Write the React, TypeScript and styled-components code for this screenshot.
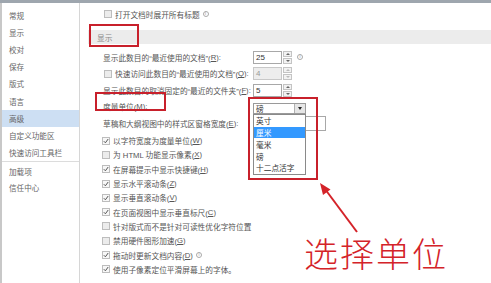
import React from "react";
import styled, { createGlobalStyle } from "styled-components";

const Global = createGlobalStyle`
  html, body { margin: 0; padding: 0; background: #fff; }
  * { box-sizing: border-box; }
`;

const Window = styled.div`
  position: relative;
  width: 491px;
  height: 283px;
  overflow: hidden;
  display: flex;
  background: #fff;
  border-top: 3px solid #9ea6ae;
  font-family: "Liberation Sans", "Noto Sans CJK SC", sans-serif;
  font-size: 7.7px;
  color: #555;
`;

const Sidebar = styled.nav`
  width: 80px;
  flex: none;
  display: flex;
  flex-direction: column;
  padding-top: 3.5px;
  border-left: 2px solid #c8c8c8;
  border-right: 1px solid #d6d6d6;
`;

const NavItem = styled.div<{ $active?: boolean; $h?: number }>`
  height: ${(p) => p.$h ?? 17.2}px;
  display: flex;
  align-items: center;
  padding-left: 7px;
  font-size: 7.6px;
  color: #666;
  background: ${(p) => (p.$active ? "#cddff3" : "transparent")};
`;

const NavSep = styled.div`
  height: 1px;
  margin: 0 0 2px 0;
  background: #dcdcdc;
`;

const Main = styled.main`
  flex: 1;
  display: flex;
  flex-direction: column;
  padding: 4px 0 0 8px;
`;

const TopRow = styled.div`
  height: 14px;
  display: flex;
  align-items: center;
  padding-left: 16px;
`;

const Band = styled.div`
  position: relative;
  margin-top: 9px;
  height: 14px;
  display: flex;
  align-items: center;
  padding-left: 9px;
  background: #ececec;
  color: #888;
`;

const Group = styled.div`
  margin-top: 5px;
  display: flex;
  flex-direction: column;
`;

const FieldRow = styled.div`
  height: 16.5px;
  display: grid;
  grid-template-columns: 165px auto;
  align-items: center;
`;

const FieldLabel = styled.div<{ $indent?: number }>`
  position: relative;
  display: flex;
  align-items: center;
  padding-left: ${(p) => p.$indent ?? 15}px;
  white-space: nowrap;
`;

const Controls = styled.div`
  position: relative;
  display: flex;
  align-items: center;
`;

const NumBox = styled.div<{ $disabled?: boolean; $w?: number; $h?: number }>`
  width: ${(p) => p.$w ?? 29}px;
  height: ${(p) => p.$h ?? 13}px;
  border: 1px solid ${(p) => (p.$disabled ? "#c8c8c8" : "#a8a8a8")};
  background: ${(p) => (p.$disabled ? "#ededed" : "#fff")};
  color: ${(p) => (p.$disabled ? "#999" : "#333")};
  font-size: 8px;
  display: flex;
  align-items: center;
  padding-left: 2px;
`;

const Spinner = styled.div`
  margin-left: 1px;
  width: 9px;
  height: 13px;
  display: flex;
  flex-direction: column;
  gap: 1px;
`;

const SpinBtn = styled.div<{ $down?: boolean; $disabled?: boolean }>`
  flex: 1;
  border: 1px solid #c4c4c4;
  background: #f2f2f2;
  display: flex;
  align-items: center;
  justify-content: center;
  &::after {
    content: "";
    border-left: 2px solid transparent;
    border-right: 2px solid transparent;
    ${(p) => (p.$down ? "border-top" : "border-bottom")}: 2px solid
      ${(p) => (p.$disabled ? "#bbb" : "#666")};
  }
`;

const Info = styled.span`
  display: inline-flex;
  align-items: center;
  justify-content: center;
  width: 6px;
  height: 6px;
  margin-left: 3px;
  border: 0.8px solid #aaa;
  border-radius: 50%;
  color: #999;
  font-size: 4.5px;
  line-height: 1;
`;

const Box = styled.span<{ $on?: boolean }>`
  width: 8px;
  height: 8px;
  flex: none;
  border: 1px solid #bdbdbd;
  background: ${(p) => (p.$on ? "#f7f7f7" : "#ececec")};
  display: inline-flex;
  align-items: center;
  justify-content: center;
  margin-right: 3px;
`;

const CheckList = styled.div`
  margin-top: 2px;
  display: flex;
  flex-direction: column;
`;

const CheckRow = styled.div`
  height: 14.3px;
  display: flex;
  align-items: center;
  padding-left: 14px;
  white-space: nowrap;
`;

const Select = styled.div`
  position: relative;
  width: 53px;
  height: 11px;
  margin-top: 3px;
  border: 1px solid #9a9a9a;
  background: #fff;
  display: flex;
  align-items: center;
  justify-content: space-between;
  padding-left: 2px;
  color: #333;
`;

const SelectBtn = styled.div`
  width: 11px;
  height: 9px;
  border-left: 1px solid #b0b0b0;
  background: #e6e6e6;
  display: flex;
  align-items: center;
  justify-content: center;
  &::after {
    content: "";
    border-left: 2.5px solid transparent;
    border-right: 2.5px solid transparent;
    border-top: 3px solid #222;
  }
`;

const ListBox = styled.div`
  position: absolute;
  z-index: 2;
  left: -1px;
  top: 10px;
  width: 53px;
  border: 1px solid #8a8a8a;
  background: #fff;
  display: flex;
  flex-direction: column;
`;

const ListItem = styled.div<{ $sel?: boolean }>`
  height: 11.8px;
  display: flex;
  align-items: center;
  padding-left: 2px;
  color: ${(p) => (p.$sel ? "#fff" : "#333")};
  background: ${(p) => (p.$sel ? "#3399ff" : "transparent")};
`;

const RedFrame = styled.div<{ $l: number; $t: number; $w: number; $h: number }>`
  position: absolute;
  z-index: 3;
  left: ${(p) => p.$l}px;
  top: ${(p) => p.$t}px;
  width: ${(p) => p.$w}px;
  height: ${(p) => p.$h}px;
  border: 2.5px solid #c8202b;
  pointer-events: none;
`;

const Arrow = styled.svg`
  position: absolute;
  left: 0;
  top: 0;
  z-index: 4;
`;

const Caption = styled.div`
  position: absolute;
  z-index: 4;
  left: 304px;
  top: 233px;
  font-family: "Noto Sans CJK SC", sans-serif;
  font-size: 34px;
  font-weight: 300;
  letter-spacing: 2px;
  line-height: 1;
  color: #d42329;
`;

const Tick = () => (
  <svg width="6" height="6" viewBox="0 0 6 6">
    <path d="M0.8 3.2 L2.4 4.8 L5.2 1" fill="none" stroke="#555" strokeWidth="1" />
  </svg>
);

const Check = ({ on }: { on?: boolean }) => <Box $on={on}>{on && <Tick />}</Box>;

const nav = ["常规", "显示", "校对", "保存", "版式", "语言", "高级", "自定义功能区", "快速访问工具栏"];

const checks: { on: boolean; label: React.ReactNode }[] = [
  { on: true, label: <>以字符宽度为度量单位(<u>W</u>)</> },
  { on: false, label: <>为 HTML 功能显示像素(<u>X</u>)</> },
  { on: true, label: <>在屏幕提示中显示快捷键(<u>H</u>)</> },
  { on: true, label: <>显示水平滚动条(<u>Z</u>)</> },
  { on: true, label: <>显示垂直滚动条(<u>V</u>)</> },
  { on: true, label: <>在页面视图中显示垂直标尺(<u>C</u>)</> },
  { on: false, label: <>针对版式而不是针对可读性优化字符位置</> },
  { on: false, label: <>禁用硬件图形加速(<u>G</u>)</> },
  { on: true, label: <>拖动时更新文档内容(<u>D</u>)<Info>i</Info></> },
  { on: true, label: <>使用子像素定位平滑屏幕上的字体。</> },
];

const Spin = ({ value, disabled, info }: { value: string; disabled?: boolean; info?: boolean }) => (
  <Controls>
    <NumBox $disabled={disabled}>{value}</NumBox>
    <Spinner>
      <SpinBtn $disabled={disabled} />
      <SpinBtn $down $disabled={disabled} />
    </Spinner>
    {info && <Info style={{ marginLeft: 5 }}>i</Info>}
  </Controls>
);

export default function App() {
  return (
    <>
      <Global />
      <Window>
        <Sidebar>
          {nav.map((n) => (
            <NavItem key={n} $active={n === "高级"}>
              {n}
            </NavItem>
          ))}
          <NavSep />
          <NavItem $h={15.5}>加载项</NavItem>
          <NavItem $h={15.5}>信任中心</NavItem>
        </Sidebar>

        <Main>
          <TopRow>
            <Check />
            打开文档时展开所有标题
            <Info>i</Info>
          </TopRow>

          <Band>
            显示
            <RedFrame $l={1} $t={-6} $w={50} $h={23} />
          </Band>

          <Group>
            <FieldRow>
              <FieldLabel>显示此数目的“最近使用的文档”(<u>R</u>):</FieldLabel>
              <Spin value="25" info />
            </FieldRow>
            <FieldRow>
              <FieldLabel $indent={16}>
                <Check />
                快速访问此数目的“最近使用的文档”(<u>Q</u>):
              </FieldLabel>
              <Spin value="4" disabled />
            </FieldRow>
            <FieldRow>
              <FieldLabel>显示此数目的取消固定的“最近的文件夹”(<u>F</u>):</FieldLabel>
              <Spin value="5" />
            </FieldRow>
            <FieldRow>
              <FieldLabel>
                度量单位(<u>M</u>):
                <RedFrame $l={7} $t={-9} $w={71} $h={19} />
              </FieldLabel>
              <Controls>
                <Select>
                  磅
                  <SelectBtn />
                  <ListBox>
                    <ListItem>英寸</ListItem>
                    <ListItem $sel>厘米</ListItem>
                    <ListItem>毫米</ListItem>
                    <ListItem>磅</ListItem>
                    <ListItem>十二点活字</ListItem>
                  </ListBox>
                  <RedFrame $l={-6} $t={-7} $w={70} $h={83} />
                </Select>
              </Controls>
            </FieldRow>
            <FieldRow>
              <FieldLabel>草稿和大纲视图中的样式区窗格宽度(<u>E</u>):</FieldLabel>
              <Controls>
                <NumBox $w={73} $h={15} />
              </Controls>
            </FieldRow>
          </Group>

          <CheckList>
            {checks.map((c, i) => (
              <CheckRow key={i}>
                <Check on={c.on} />
                {c.label}
              </CheckRow>
            ))}
          </CheckList>
        </Main>

        <Arrow width="491" height="283" viewBox="0 0 491 283">
          <line x1="357" y1="229" x2="325" y2="186" stroke="#d42329" strokeWidth="2" />
          <polygon points="320,180 330.5,186.5 323,192" fill="#d42329" />
        </Arrow>
        <Caption>选择单位</Caption>
      </Window>
    </>
  );
}
